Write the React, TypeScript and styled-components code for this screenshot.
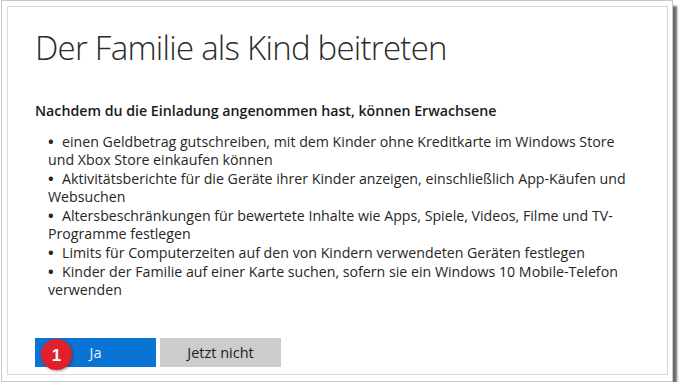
import React from 'react';
import styled, { createGlobalStyle } from 'styled-components';

const GlobalStyle = createGlobalStyle`
  html, body {
    margin: 0;
    padding: 0;
    background: #ffffff;
  }
  body {
    font-family: 'Open Sans', 'Noto Sans', sans-serif;
    color: #1f1f1f;
  }
`;

const Frame = styled.div`
  margin-left: 1px;
  width: 672px;
  height: 382px;
  box-sizing: border-box;
  border: 1px solid #c9c9c9;
  background: #ffffff;
  box-shadow: 5px 5px 2px -1px #6a6a6a;
  padding: 5px 4px 6px 5px;
`;

const Panel = styled.div`
  height: 100%;
  box-sizing: border-box;
  border: 1px solid #d9d9d9;
  padding: 19px 0 0 27px;
  display: flex;
  flex-direction: column;
`;

const Title = styled.h1`
  margin: 0;
  font-family: 'Open Sans', sans-serif;
  font-weight: 300;
  font-size: 33px;
  line-height: 44px;
  color: #2b2b2b;
  letter-spacing: -0.75px;
`;

const Lead = styled.p`
  margin: 32px 0 0;
  font-size: 14.2px;
  font-weight: 600;
  line-height: 18px;
  color: #1a1a1a;
`;

const List = styled.ul`
  list-style: none;
  margin: 12px 0 0;
  padding: 0 0 0 13px;
  width: 586px;
`;

const Item = styled.li`
  font-size: 14.2px;
  line-height: 18px;
  color: #262626;

  &::before {
    content: '•';
    display: inline-block;
    width: 14px;
    font-size: 15px;
    font-weight: 700;
  }
`;

const Actions = styled.div`
  margin-top: auto;
  margin-bottom: 7px;
  display: flex;
  gap: 4px;
`;

const Button = styled.button<{ $primary?: boolean }>`
  position: relative;
  width: 121px;
  height: 29px;
  border: none;
  padding: 0;
  font-family: 'Open Sans', sans-serif;
  font-size: 14.5px;
  background: ${({ $primary }) => ($primary ? '#0a74d4' : '#cccccc')};
  color: ${({ $primary }) => ($primary ? '#e8f2ff' : '#1c1c1c')};
`;

const Badge = styled.span`
  position: absolute;
  left: 6px;
  top: 1px;
  width: 31px;
  height: 31px;
  border-radius: 50%;
  background: #e0202a;
  box-shadow: 1px 1px 3px rgba(90, 0, 0, 0.45);
  color: #ffffff;
  font-family: 'Liberation Sans', sans-serif;
  font-weight: 700;
  font-size: 17px;
  line-height: 33px;
  text-align: center;
`;

const items = [
  'einen Geldbetrag gutschreiben, mit dem Kinder ohne Kreditkarte im Windows Store und Xbox Store einkaufen können',
  'Aktivitätsberichte für die Geräte ihrer Kinder anzeigen, einschließlich App-Käufen und Websuchen',
  'Altersbeschränkungen für bewertete Inhalte wie Apps, Spiele, Videos, Filme und TV-Programme festlegen',
  'Limits für Computerzeiten auf den von Kindern verwendeten Geräten festlegen',
  'Kinder der Familie auf einer Karte suchen, sofern sie ein Windows 10 Mobile-Telefon verwenden',
];

export default function App() {
  return (
    <>
      <GlobalStyle />
      <Frame>
        <Panel>
          <Title>Der Familie als Kind beitreten</Title>
          <Lead>Nachdem du die Einladung angenommen hast, können Erwachsene</Lead>
          <List>
            {items.map((text) => (
              <Item key={text}>{text}</Item>
            ))}
          </List>
          <Actions>
            <Button $primary>
              <Badge>1</Badge>
              Ja
            </Button>
            <Button>Jetzt nicht</Button>
          </Actions>
        </Panel>
      </Frame>
    </>
  );
}
